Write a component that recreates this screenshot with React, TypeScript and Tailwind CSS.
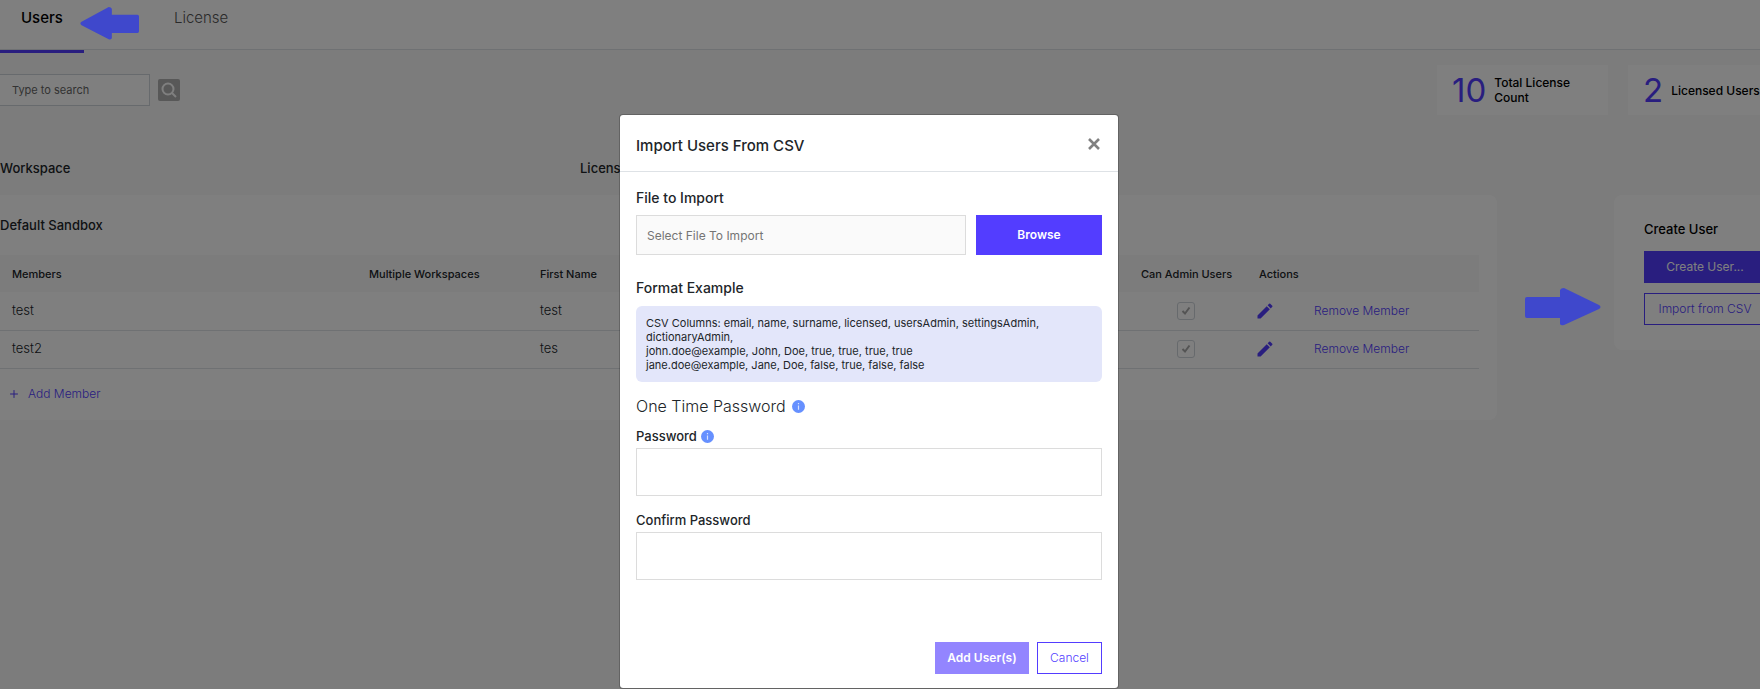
import { Plus } from "lucide-react";
import { MdEdit } from "react-icons/md";
import type { ReactNode } from "react";

const members = [
  { name: "test", firstName: "test" },
  { name: "test2", firstName: "tes" },
];

export default function App() {
  return (
    <div className="relative min-h-screen overflow-hidden bg-[#f8f8f8] font-['Inter',sans-serif] text-[#212529]">
      <Tabs />
      <main>
        <Toolbar />
        <div className="mt-[43px] flex h-[37px] text-[13px] leading-5 font-medium">
          <h2 className="w-[580px]">Workspace</h2>
          <h2>Licenses</h2>
        </div>
        <div className="flex items-start">
          <Workspace />
          <div className="w-[117px] shrink-0" />
          <CreateUser />
        </div>
      </main>
      <div className="absolute inset-0 bg-black/50" />
      <ImportDialog />
      <Arrow className="absolute top-[7px] left-20 h-[33px] w-[59px] -scale-x-100" />
      <Arrow className="absolute top-[288px] right-[159px] h-[38px] w-[76px]" />
    </div>
  );
}

function Tabs() {
  return (
    <nav className="flex h-[50px] border-b border-[#dee2e6] bg-white leading-5">
      <a href="#users" className="h-[53px] w-[84px] border-b-[3px] border-[#533dff] pt-2 pl-[21px] text-[15px] font-medium text-black">
        Users
      </a>
      <a href="#license" className="ml-[90px] pt-2 text-[15px] font-light text-[#555]">License</a>
    </nav>
  );
}

function Toolbar() {
  return (
    <div className="flex justify-between">
      <div className="mt-6 flex h-8 items-center gap-2">
        <input
          type="text"
          aria-label="Search users"
          placeholder="Type to search"
          className="h-8 w-[150px] border border-l-0 border-[#ced4da] bg-white pl-3 text-[11px] placeholder:text-[#666]"
        />
        <button aria-label="Search" className="flex size-[22px] items-center justify-center rounded-xs bg-[#b0b0b0]">
          <svg viewBox="0 0 16 16" className="size-4" fill="none" stroke="white" strokeWidth="2">
            <circle cx="7" cy="7" r="5.5" />
            <path d="M11 11l4 4" />
          </svg>
        </button>
      </div>
      <div className="mt-[15px] flex gap-5">
        <Stat value="10" label="Total License Count" className="w-[171px]" labelClassName="w-[90px]" />
        <Stat value="2" label="Licensed Users" className="w-[132px]" labelClassName="whitespace-nowrap" />
      </div>
    </div>
  );
}

function Stat({ value, label, className, labelClassName }: { value: string; label: string; className: string; labelClassName: string }) {
  return (
    <div className={`flex h-[50px] items-center gap-2 bg-white pl-[15px] ${className}`}>
      <span className="text-[33px] leading-10 text-[#533dff]">{value}</span>
      <span className={`text-xs leading-[15px] font-medium text-black ${labelClassName}`}>{label}</span>
    </div>
  );
}

function Workspace() {
  return (
    <section className="h-[225px] min-w-0 flex-1 rounded-r-lg bg-white pr-[18px]">
      <h3 className="pt-5 text-[13px] leading-5 font-medium">Default Sandbox</h3>
      <table className="mt-5 w-full table-fixed border-collapse text-left">
        <thead>
          <tr className="h-[37px] bg-[#f8f8f8] text-[11px] *:pt-[2px]">
            <th className="w-[369px] pl-3 font-medium">Members</th>
            <th className="w-[171px] font-medium">Multiple Workspaces</th>
            <th className="font-medium">First Name</th>
            <th className="w-[118px] font-medium">Can Admin Users</th>
            <th className="w-[55px] font-medium">Actions</th>
            <th className="w-[165px]" />
          </tr>
        </thead>
        <tbody>
          {members.map((m) => (
            <tr key={m.name} className="h-[38px] border-b border-[#dee2e6] text-[13px] font-light">
              <td className="pl-3">{m.name}</td>
              <td />
              <td>{m.firstName}</td>
              <td className="pl-9">
                <span className="relative flex size-[18px]">
                  <input type="checkbox" defaultChecked disabled aria-label={`${m.name} can admin users`} className="size-[18px] appearance-none rounded-[3px] border border-[#ced4da]" />
                  <svg viewBox="0 0 18 18" className="absolute inset-0 size-[18px]" fill="none" stroke="#a8a8a8" strokeWidth="2">
                    <path d="M5.5 9l2.5 2.5 4.5-6" />
                  </svg>
                </span>
              </td>
              <td>
                <button aria-label={`Edit ${m.name}`} className="-ml-1 flex text-[#533dff]">
                  <MdEdit size={20} />
                </button>
              </td>
              <td>
                <button className="text-xs text-[#533dff]">Remove Member</button>
              </td>
            </tr>
          ))}
        </tbody>
      </table>
      <button className="mt-[15px] ml-2 flex items-center gap-2 text-xs leading-5 font-light text-[#533dff]">
        <Plus size={12} strokeWidth={2} />
        Add Member
      </button>
    </section>
  );
}

function CreateUser() {
  return (
    <section className="h-[155px] w-[146px] shrink-0 rounded-l-lg bg-white pt-6 pl-[30px]">
      <h3 className="text-[13px] leading-5 font-medium text-black">Create User</h3>
      <div className="mt-3 flex w-[122px] flex-col gap-2.5 text-xs">
        <button className="h-8 bg-[#533dff] text-white">Create User...</button>
        <button className="h-8 border border-[#533dff] font-light text-[#533dff]">Import from CSV</button>
      </div>
    </section>
  );
}

function ImportDialog() {
  return (
    <div className="absolute inset-0 flex items-start justify-center pt-[114px] pr-[22px]">
      <div role="dialog" aria-labelledby="dialog-title" className="w-[500px] rounded border border-black/20 bg-white bg-clip-padding">
        <header className="flex h-[57px] items-center justify-between border-b border-[#dee2e6] px-4 pt-[2px]">
          <h1 id="dialog-title" className="pt-1 text-[15px] leading-6 font-medium">Import Users From CSV</h1>
          <button aria-label="Close" className="flex size-4 items-center justify-center">
            <svg viewBox="0 0 12 12" className="size-3" stroke="#808080" strokeWidth="2.6">
              <path d="M1 1l10 10M11 1L1 11" />
            </svg>
          </button>
        </header>
        <form className="px-4 pt-4 pb-[14px]">
          <label htmlFor="file" className="block text-[14px] leading-5 font-medium">File to Import</label>
          <div className="mt-[7px] flex gap-2.5">
            <input
              id="file"
              type="text"
              readOnly
              placeholder="Select File To Import"
              className="h-10 min-w-0 flex-1 border border-[#dcdcdc] bg-[#fafafa] px-2.5 text-xs placeholder:text-[#757575]"
            />
            <button type="button" className="h-10 w-[126px] bg-[#533dff] text-xs font-semibold text-white">Browse</button>
          </div>
          <h2 className="mt-[23px] text-[14px] leading-5 font-medium">Format Example</h2>
          <div className="mt-2 rounded-md bg-[#e3e6fa] p-2.5 text-[11px] leading-[14px]">
            CSV Columns: email, name, surname, licensed, usersAdmin, settingsAdmin, dictionaryAdmin,
            <br />
            john.doe@example, John, Doe, true, true, true, true
            <br />
            jane.doe@example, Jane, Doe, false, true, false, false
          </div>
          <h2 className="mt-3 flex items-center gap-1.5 text-[16px] leading-6 font-light">
            One Time Password <Info />
          </h2>
          <Field id="password" className="mt-2">
            Password <Info />
          </Field>
          <Field id="confirm" className="mt-[14px]">Confirm Password</Field>
          <div className="mt-[62px] flex justify-end gap-2 text-xs">
            <button type="button" className="h-8 w-[94px] bg-[#9385ff] font-semibold text-white">Add User(s)</button>
            <button type="button" className="h-8 w-[65px] border border-[#533dff] font-light text-[#533dff]">Cancel</button>
          </div>
        </form>
      </div>
    </div>
  );
}

function Field({ id, className, children }: { id: string; className: string; children: ReactNode }) {
  return (
    <div className={className}>
      <label htmlFor={id} className="mb-[2px] flex items-center gap-1 text-[13px] leading-5 font-medium">{children}</label>
      <input id={id} type="password" className="block h-12 w-full border border-[#dcdcdc] px-2.5" />
    </div>
  );
}

function Info() {
  return (
    <svg viewBox="0 0 13 13" className="size-[13px]" aria-hidden="true">
      <circle cx="6.5" cy="6.5" r="6.5" fill="#6690ff" />
      <path d="M6.5 3v1.3M6.5 5.5v4.3" stroke="#d5e0ff" strokeWidth="1.2" />
    </svg>
  );
}

function Arrow({ className }: { className: string }) {
  return (
    <svg viewBox="0 0 76 38" preserveAspectRatio="none" className={className} aria-hidden="true">
      <path
        d="M2 9H35V2Q36 0 39 0L74 17Q77 19 74 21L39 37Q36 38 35 36V30H2Q0 30 0 28V11Q0 9 2 9Z"
        fill="#3f48cc"
      />
    </svg>
  );
}
